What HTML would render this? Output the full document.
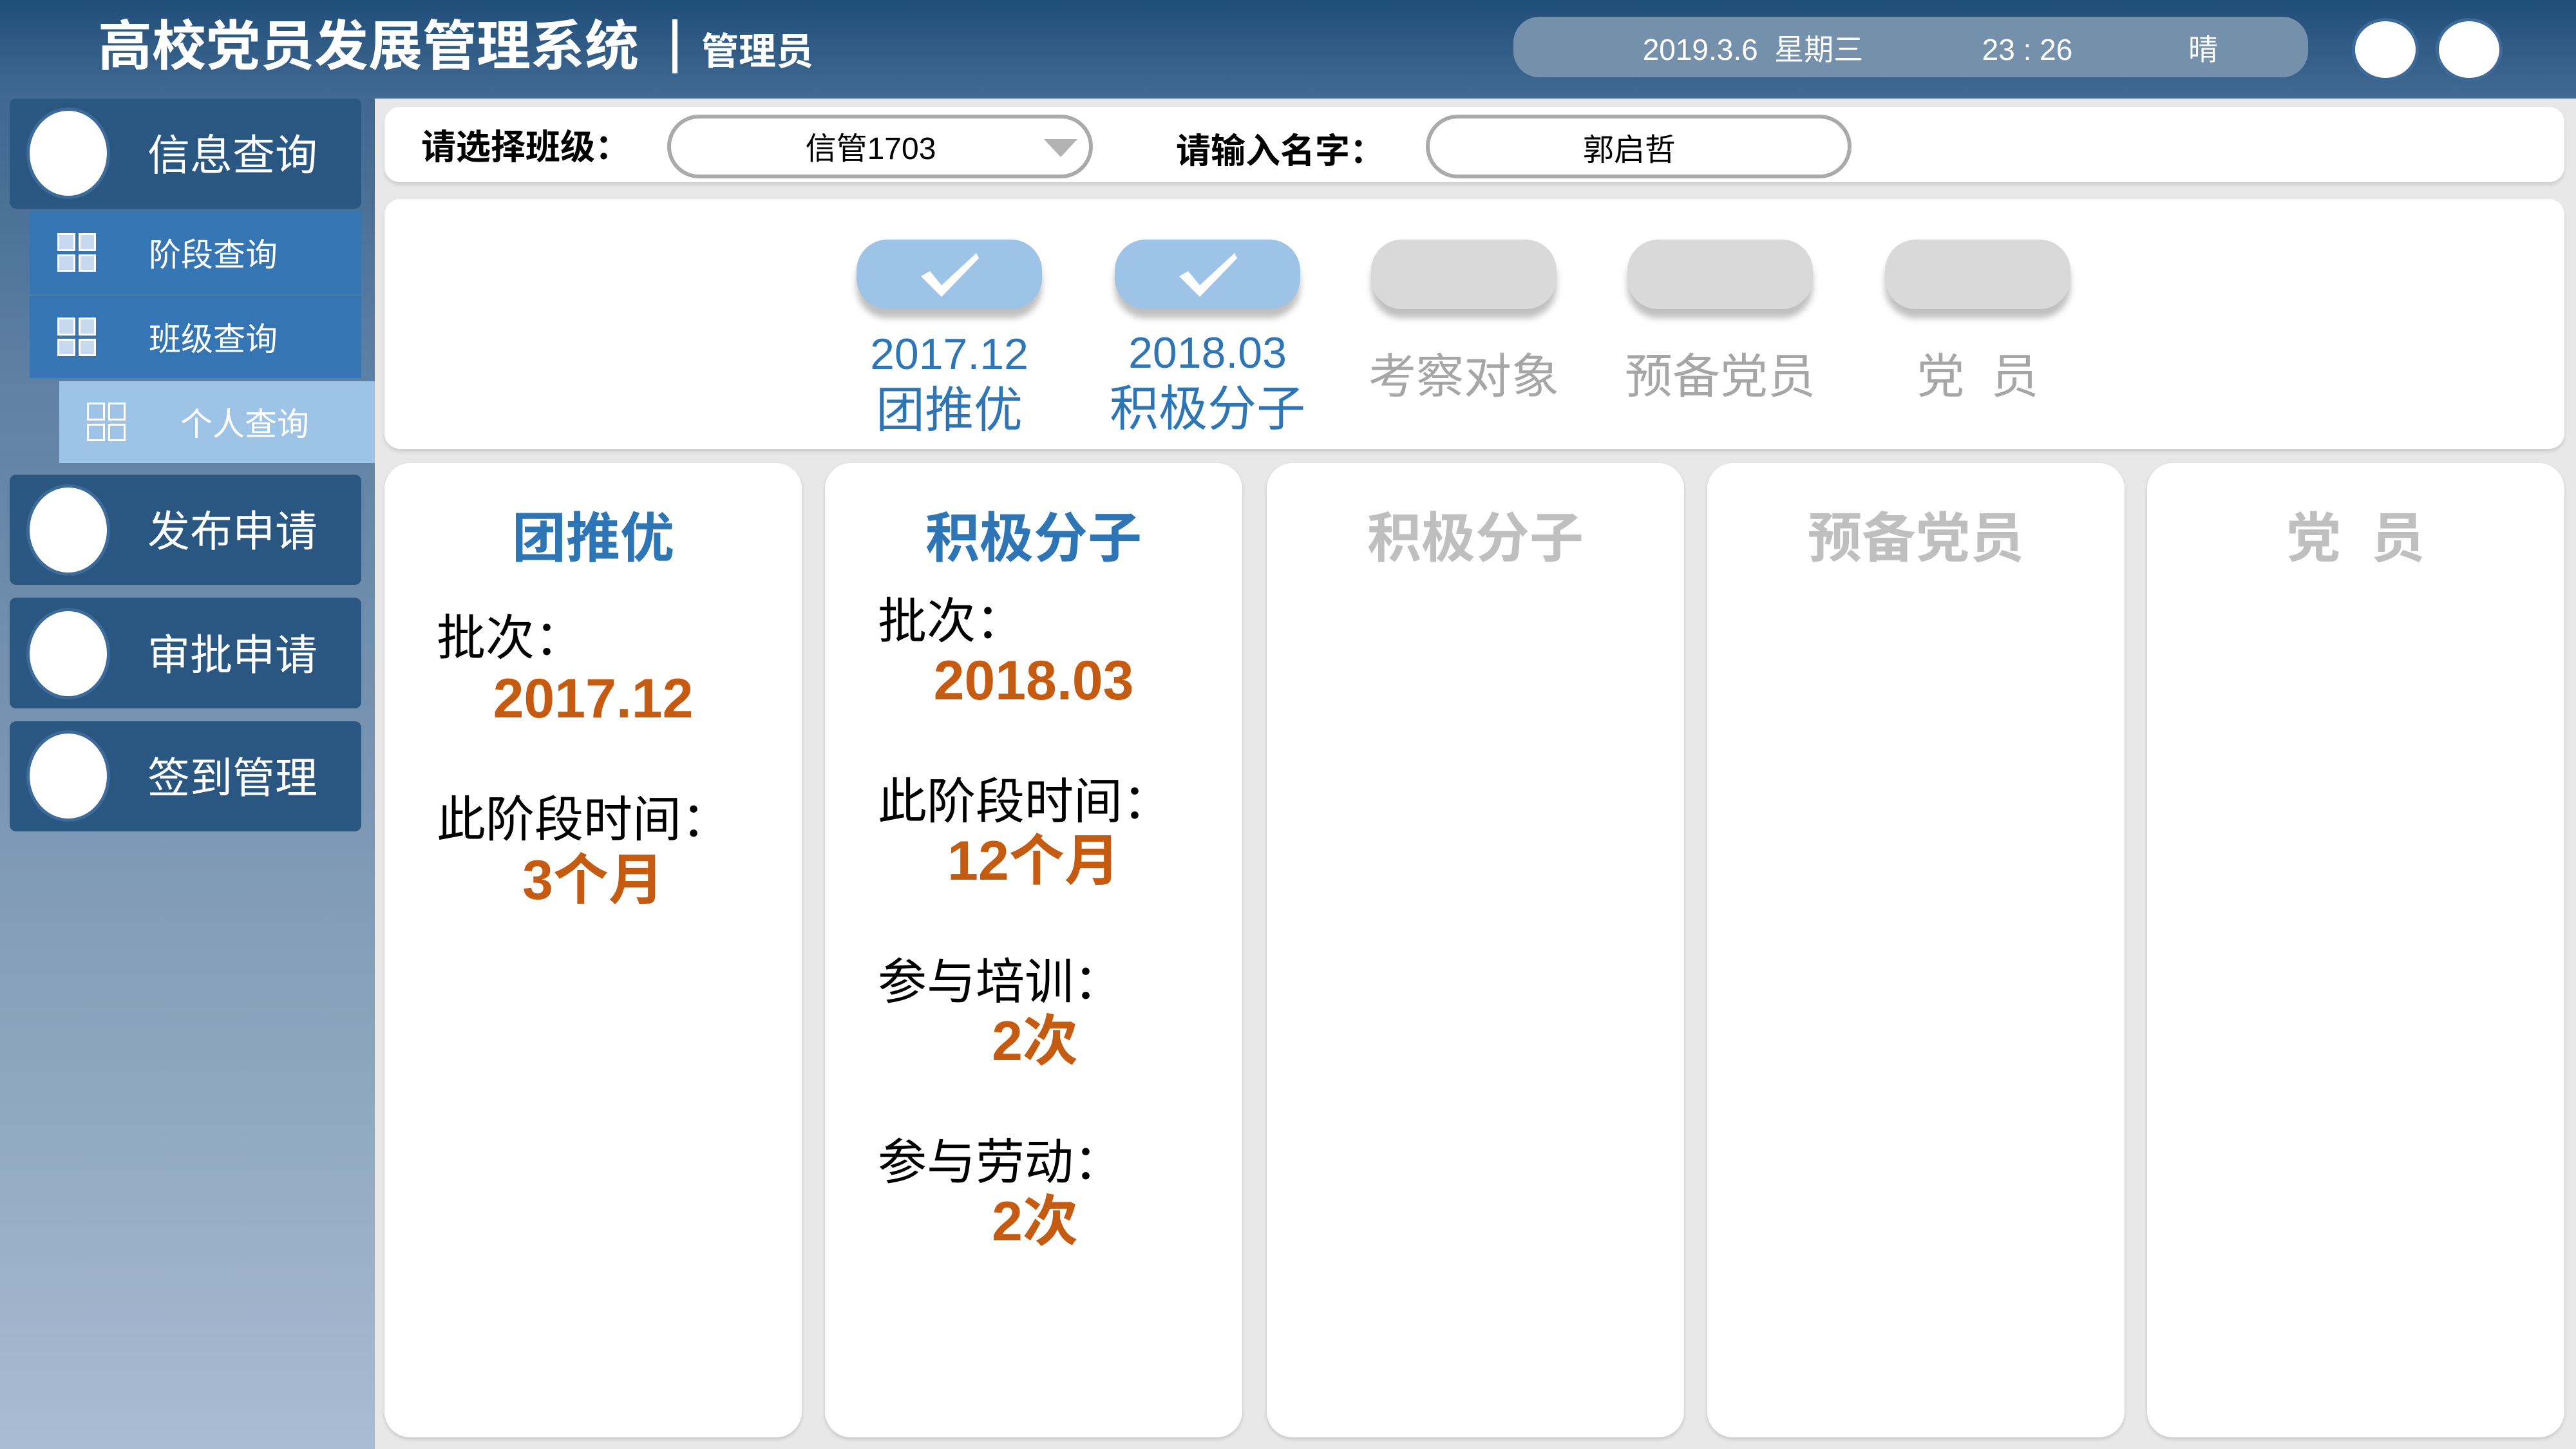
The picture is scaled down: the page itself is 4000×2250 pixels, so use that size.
<!DOCTYPE html>
<html><head><meta charset="utf-8"><style>
*{margin:0;padding:0;box-sizing:border-box}
body{width:4000px;height:2250px;position:relative;overflow:hidden;background:#e8e8e8;font-family:"Liberation Sans","Noto Sans CJK SC",sans-serif}
.a{position:absolute}
.t{position:absolute;white-space:nowrap;line-height:1;margin-top:4px}
.c{transform:translateX(-50%)}
#side{left:0;top:0;width:582px;height:2250px;background:linear-gradient(#1f4e79 0px,#3f6790 150px,#5f81a3 600px,#8ba3bd 1600px,#a8bcd2 2250px)}
#head{left:0;top:0;width:4000px;height:153px;background:linear-gradient(#1f4e79,#426a93)}
.menu{background:#2a5782;border-radius:10px;left:15px;width:546px}
.circ{background:#fff;border:5px solid #3d6a98;border-radius:50%}
.sub{background:#3575b4;left:46px;width:515px}
.ico{position:absolute;width:60px;height:60px;display:grid;grid-template-columns:1fr 1fr;gap:5px}
.ico i{background:#c5d9ef;border:3px solid #fff}
.white{background:#fff;border-radius:24px;box-shadow:0 4px 6px rgba(0,0,0,.12)}
.pill{width:288px;height:108px;border-radius:48px;box-shadow:0 14px 10px rgba(0,0,0,.25)}
.card{top:719px;width:648px;height:1513px;background:#fff;border-radius:40px;box-shadow:0 3px 6px rgba(0,0,0,.15)}
.bl{color:#2e75b6}.gr{color:#a6a6a6}.or{color:#c55a11;font-weight:bold}
</style></head><body>
<div class="a" id="side"></div>
<div class="a" id="head"></div>
<div class="t" style="left:152px;top:26px;font-size:84px;font-weight:bold;color:#fff">高校党员发展管理系统</div>
<div class="a" style="left:1044px;top:30px;width:8px;height:84px;background:#fff"></div>
<div class="t" style="left:1089px;top:48px;font-size:58px;font-weight:bold;color:#fff">管理员</div>
<div class="a" style="left:2350px;top:26px;width:1234px;height:94px;background:#7590ab;border-radius:40px"></div>
<div class="t c" style="left:2722px;top:50px;font-size:46px;color:#fff">2019.3.6&nbsp; 星期三</div>
<div class="t c" style="left:3148px;top:50px;font-size:46px;color:#fff">23 : 26</div>
<div class="t c" style="left:3421px;top:50px;font-size:46px;color:#fff">晴</div>
<div class="a circ" style="left:3652px;top:28px;width:104px;height:98px"></div>
<div class="a circ" style="left:3782px;top:28px;width:104px;height:98px"></div>

<div class="a menu" style="top:153px;height:171px"></div>
<div class="a circ" style="left:41px;top:167px;width:130px;height:142px"></div>
<div class="t" style="left:229px;top:204px;font-size:66px;color:#fff">信息查询</div>
<div class="a sub" style="top:327px;height:130px"></div>
<div class="ico" style="left:89px;top:362px"><i></i><i></i><i></i><i></i></div>
<div class="t" style="left:231px;top:367px;font-size:50px;color:#fff">阶段查询</div>
<div class="a sub" style="top:459px;height:128px"></div>
<div class="ico" style="left:89px;top:493px"><i></i><i></i><i></i><i></i></div>
<div class="t" style="left:231px;top:498px;font-size:50px;color:#fff">班级查询</div>
<div class="a" style="left:92px;top:592px;width:490px;height:127px;background:#9dc3e6"></div>
<div class="ico" style="left:135px;top:625px"><i style="background:#9dc3e6"></i><i style="background:#9dc3e6"></i><i style="background:#9dc3e6"></i><i style="background:#9dc3e6"></i></div>
<div class="t" style="left:280px;top:630px;font-size:50px;color:#fff">个人查询</div>

<div class="a menu" style="top:737px;height:171px"></div>
<div class="a circ" style="left:41px;top:752px;width:130px;height:142px"></div>
<div class="t" style="left:229px;top:788px;font-size:66px;color:#fff">发布申请</div>
<div class="a menu" style="top:928px;height:172px"></div>
<div class="a circ" style="left:41px;top:944px;width:130px;height:142px"></div>
<div class="t" style="left:229px;top:980px;font-size:66px;color:#fff">审批申请</div>
<div class="a menu" style="top:1120px;height:171px"></div>
<div class="a circ" style="left:41px;top:1134px;width:130px;height:142px"></div>
<div class="t" style="left:229px;top:1171px;font-size:66px;color:#fff">签到管理</div>

<div class="a white" style="left:597px;top:166px;width:3385px;height:117px"></div>
<div class="t" style="left:654px;top:198px;font-size:54px;font-weight:bold;color:#000">请选择班级：</div>
<div class="a" style="left:1036px;top:178px;width:661px;height:99px;border:6px solid #aaa;border-radius:50px;background:#fff"></div>
<div class="t c" style="left:1352px;top:204px;font-size:48px;color:#000">信管1703</div>
<svg class="a" style="left:1617px;top:210px" width="60" height="40"><path d="M4 6 L56 6 L30 34 Z" fill="#b3b3b3"/></svg>
<div class="t" style="left:1826px;top:204px;font-size:54px;font-weight:bold;color:#000">请输入名字：</div>
<div class="a" style="left:2214px;top:178px;width:661px;height:99px;border:6px solid #aaa;border-radius:50px;background:#fff"></div>
<div class="t c" style="left:2530px;top:206px;font-size:48px;color:#000">郭启哲</div>

<div class="a white" style="left:597px;top:309px;width:3385px;height:388px"></div>
<div class="a pill" style="left:1330px;top:372px;background:#9dc3e6"></div>
<div class="a pill" style="left:1731px;top:372px;background:#9dc3e6"></div>
<div class="a pill" style="left:2129px;top:372px;background:#d9d9d9"></div>
<div class="a pill" style="left:2527px;top:372px;background:#d9d9d9"></div>
<div class="a pill" style="left:2927px;top:372px;background:#d9d9d9"></div>
<svg class="a" style="left:1424px;top:385px" width="100" height="80"><path d="M6 44 L20 36 L38 58 L92 8 L96 16 L38 76 Z" fill="#fff"/></svg>
<svg class="a" style="left:1825px;top:385px" width="100" height="80"><path d="M6 44 L20 36 L38 58 L92 8 L96 16 L38 76 Z" fill="#fff"/></svg>
<div class="t c bl" style="left:1474px;top:512px;font-size:68px">2017.12</div>
<div class="t c bl" style="left:1474px;top:596px;font-size:76px">团推优</div>
<div class="t c bl" style="left:1875px;top:510px;font-size:68px">2018.03</div>
<div class="t c bl" style="left:1875px;top:594px;font-size:76px">积极分子</div>
<div class="t c gr" style="left:2273px;top:544px;font-size:74px">考察对象</div>
<div class="t c gr" style="left:2671px;top:544px;font-size:74px">预备党员</div>
<div class="t c gr" style="left:3071px;top:544px;font-size:74px">党&nbsp; 员</div>

<div class="a card" style="left:597px"></div>
<div class="a card" style="left:1281px"></div>
<div class="a card" style="left:1967px"></div>
<div class="a card" style="left:2651px"></div>
<div class="a card" style="left:3334px"></div>
<div class="t c bl" style="left:921px;top:790px;font-size:84px;font-weight:bold">团推优</div>
<div class="t c bl" style="left:1605px;top:790px;font-size:84px;font-weight:bold">积极分子</div>
<div class="t c" style="left:2291px;top:790px;font-size:84px;font-weight:bold;color:#bfbfbf">积极分子</div>
<div class="t c" style="left:2975px;top:790px;font-size:84px;font-weight:bold;color:#bfbfbf">预备党员</div>
<div class="t c" style="left:3658px;top:790px;font-size:84px;font-weight:bold;color:#bfbfbf">党&nbsp; 员</div>

<div class="t" style="left:678px;top:950px;font-size:76px">批次：</div>
<div class="t c or" style="left:921px;top:1038px;font-size:86px">2017.12</div>
<div class="t" style="left:678px;top:1232px;font-size:76px">此阶段时间：</div>
<div class="t c or" style="left:921px;top:1320px;font-size:86px">3个月</div>

<div class="t" style="left:1363px;top:924px;font-size:76px">批次：</div>
<div class="t c or" style="left:1605px;top:1010px;font-size:86px">2018.03</div>
<div class="t" style="left:1363px;top:1204px;font-size:76px">此阶段时间：</div>
<div class="t c or" style="left:1605px;top:1290px;font-size:86px">12个月</div>
<div class="t" style="left:1363px;top:1484px;font-size:76px">参与培训：</div>
<div class="t c or" style="left:1607px;top:1570px;font-size:86px">2次</div>
<div class="t" style="left:1363px;top:1764px;font-size:76px">参与劳动：</div>
<div class="t c or" style="left:1607px;top:1850px;font-size:86px">2次</div>
</body></html>
